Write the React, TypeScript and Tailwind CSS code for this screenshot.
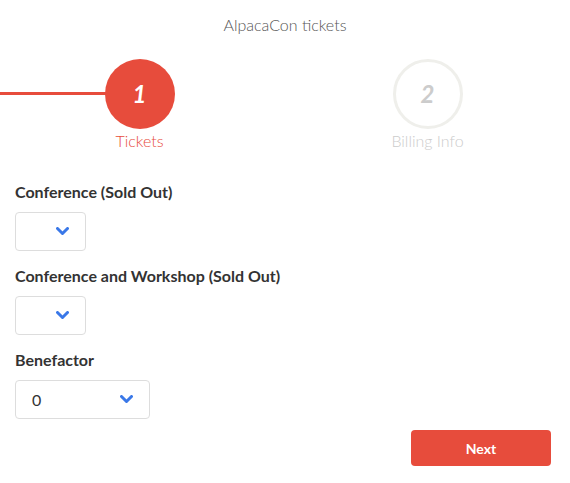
const font = { fontFamily: 'Lato, "Noto Sans", sans-serif' };

function Chevron() {
  return (
    <svg width="13" height="9" viewBox="0 0 13 9" fill="none" className="text-[#3a78e8]">
      <polyline points="1.5,1.5 6.5,6.5 11.5,1.5" stroke="currentColor" strokeWidth="3" strokeLinecap="round" strokeLinejoin="round" />
    </svg>
  );
}

function Step({
  n,
  label,
  active,
  line,
}: {
  n: number;
  label: string;
  active?: boolean;
  line?: boolean;
}) {
  return (
    <div className={line ? 'relative flex flex-col items-center pr-[6px]' : 'relative flex flex-col items-center'}>
      {line && <div className="absolute left-0 right-1/2 top-[33px] h-[3px] bg-[#e74c3c]" />}
      <div
        className={
          active
            ? 'relative z-10 flex h-[70px] w-[70px] items-center justify-center rounded-full bg-[#e74c3c]'
            : 'relative z-10 flex h-[70px] w-[70px] items-center justify-center rounded-full border-[3px] border-[#efefeb] bg-white'
        }
      >
        <span
          className={
            active
              ? 'text-[24px] font-bold italic text-white'
              : 'text-[24px] font-bold italic text-[#cccccc]'
          }
        >
          {n}
        </span>
      </div>
      <span
        className={
          active
            ? 'mt-[2px] text-[16px] leading-[20px] font-light text-[#e74c3c]'
            : 'mt-[2px] text-[16px] leading-[20px] font-light text-[#cccccc]'
        }
      >
        {label}
      </span>
    </div>
  );
}

function Select({ value, wide }: { value?: string; wide?: boolean }) {
  return (
    <div
      className={
        (wide ? 'w-[135px]' : 'w-[71px]') +
        ' flex h-[39px] items-center justify-between rounded-[4px] border border-[#dddddd] bg-white pl-4 pr-[16px]'
      }
    >
      <span className="text-[16px] text-[#333333]">{value ?? ''}</span>
      <Chevron />
    </div>
  );
}

export default function App() {
  return (
    <div className="min-h-[483px] w-[570px] bg-white" style={font}>
      <h1 className="pt-[15px] text-center text-[16px] leading-[20px] font-light text-[#555555]">
        AlpacaCon tickets
      </h1>

      <div className="mt-[24px] grid grid-cols-2">
        <Step n={1} label="Tickets" active line />
        <Step n={2} label="Billing Info" />
      </div>

      <form className="px-[15px] pt-[31px]">
        <label className="block text-[16px] leading-[20px] font-bold text-[#333333]">Conference (Sold Out)</label>
        <div className="mt-[10px]">
          <Select />
        </div>

        <label className="mt-[15px] block text-[16px] leading-[20px] font-bold text-[#333333]">
          Conference and Workshop (Sold Out)
        </label>
        <div className="mt-[10px]">
          <Select />
        </div>

        <label className="mt-[15px] block text-[16px] leading-[20px] font-bold text-[#333333]">Benefactor</label>
        <div className="mt-[10px]">
          <Select value="0" wide />
        </div>

        <div className="mt-[11px] flex justify-end pr-[4px]">
          <button
            type="button"
            className="h-[36px] w-[140px] rounded-[4px] bg-[#e74c3c] text-[14px] font-bold text-white"
          >
            Next
          </button>
        </div>
      </form>
    </div>
  );
}
